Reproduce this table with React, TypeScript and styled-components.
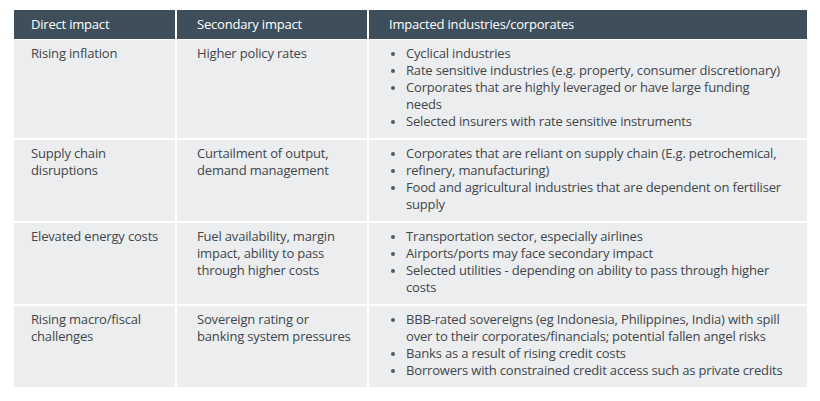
import React from "react";
import styled, { createGlobalStyle } from "styled-components";

const Global = createGlobalStyle`
  html, body { margin: 0; padding: 0; background: #ffffff; }
  body { font-family: "Open Sans", "Liberation Sans", sans-serif; }
`;

const Page = styled.div`
  padding: 10px 14px 0 14px;
  width: 792px;
`;

const Table = styled.div`
  display: grid;
  grid-template-columns: 161px 190px 438px;
  column-gap: 2px;
  row-gap: 2px;
  width: 792px;
`;

const HeadCell = styled.div<{ $pl: number }>`
  background: #3e4f5b;
  color: #ffffff;
  font-size: 13px;
  letter-spacing: -0.2px;
  line-height: 17px;
  height: 29px;
  box-sizing: border-box;
  padding: 6px 0 0 ${(p) => p.$pl}px;
  margin-bottom: -1px;
`;

const Cell = styled.div<{ $pl: number; $pr: number }>`
  background: #ecedef;
  color: #41464b;
  font-size: 13px;
  letter-spacing: -0.17px;
  line-height: 17px;
  padding: 5px ${(p) => p.$pr}px 8px ${(p) => p.$pl}px;
`;

const List = styled.ul`
  list-style: none;
  margin: 0;
  padding: 0;
`;

const Item = styled.li`
  position: relative;
  padding-left: 17px;
  &::before {
    content: "";
    position: absolute;
    left: 2px;
    top: 7px;
    width: 4px;
    height: 4px;
    border-radius: 50%;
    background: #555a5f;
  }
`;

const rows: { a: string; b: string; c: string[] }[] = [
  {
    a: "Rising inflation",
    b: "Higher policy rates",
    c: [
      "Cyclical industries",
      "Rate sensitive industries (e.g. property, consumer discretionary)",
      "Corporates that are highly leveraged or have large funding needs",
      "Selected insurers with rate sensitive instruments",
    ],
  },
  {
    a: "Supply chain disruptions",
    b: "Curtailment of output, demand management",
    c: [
      "Corporates that are reliant on supply chain (E.g. petrochemical,",
      "refinery, manufacturing)",
      "Food and agricultural industries that are dependent on fertiliser supply",
    ],
  },
  {
    a: "Elevated energy costs",
    b: "Fuel availability, margin impact, ability to pass through higher costs",
    c: [
      "Transportation sector, especially airlines",
      "Airports/ports may face secondary impact",
      "Selected utilities - depending on ability to pass through higher costs",
    ],
  },
  {
    a: "Rising macro/fiscal challenges",
    b: "Sovereign rating or banking system pressures",
    c: [
      "BBB-rated sovereigns (eg Indonesia, Philippines, India) with spill over to their corporates/financials; potential fallen angel risks",
      "Banks as a result of rising credit costs",
      "Borrowers with constrained credit access such as private credits",
    ],
  },
];

export default function App() {
  return (
    <>
      <Global />
      <Page>
        <Table>
          <HeadCell $pl={17}>Direct impact</HeadCell>
          <HeadCell $pl={20}>Secondary impact</HeadCell>
          <HeadCell $pl={20}>Impacted industries/corporates</HeadCell>
          {rows.map((r) => (
            <React.Fragment key={r.a}>
              <Cell $pl={17} $pr={2}>{r.a}</Cell>
              <Cell $pl={20} $pr={14}>{r.b}</Cell>
              <Cell $pl={20} $pr={19}>
                <List>
                  {r.c.map((t) => (
                    <Item key={t}>{t}</Item>
                  ))}
                </List>
              </Cell>
            </React.Fragment>
          ))}
        </Table>
      </Page>
    </>
  );
}
